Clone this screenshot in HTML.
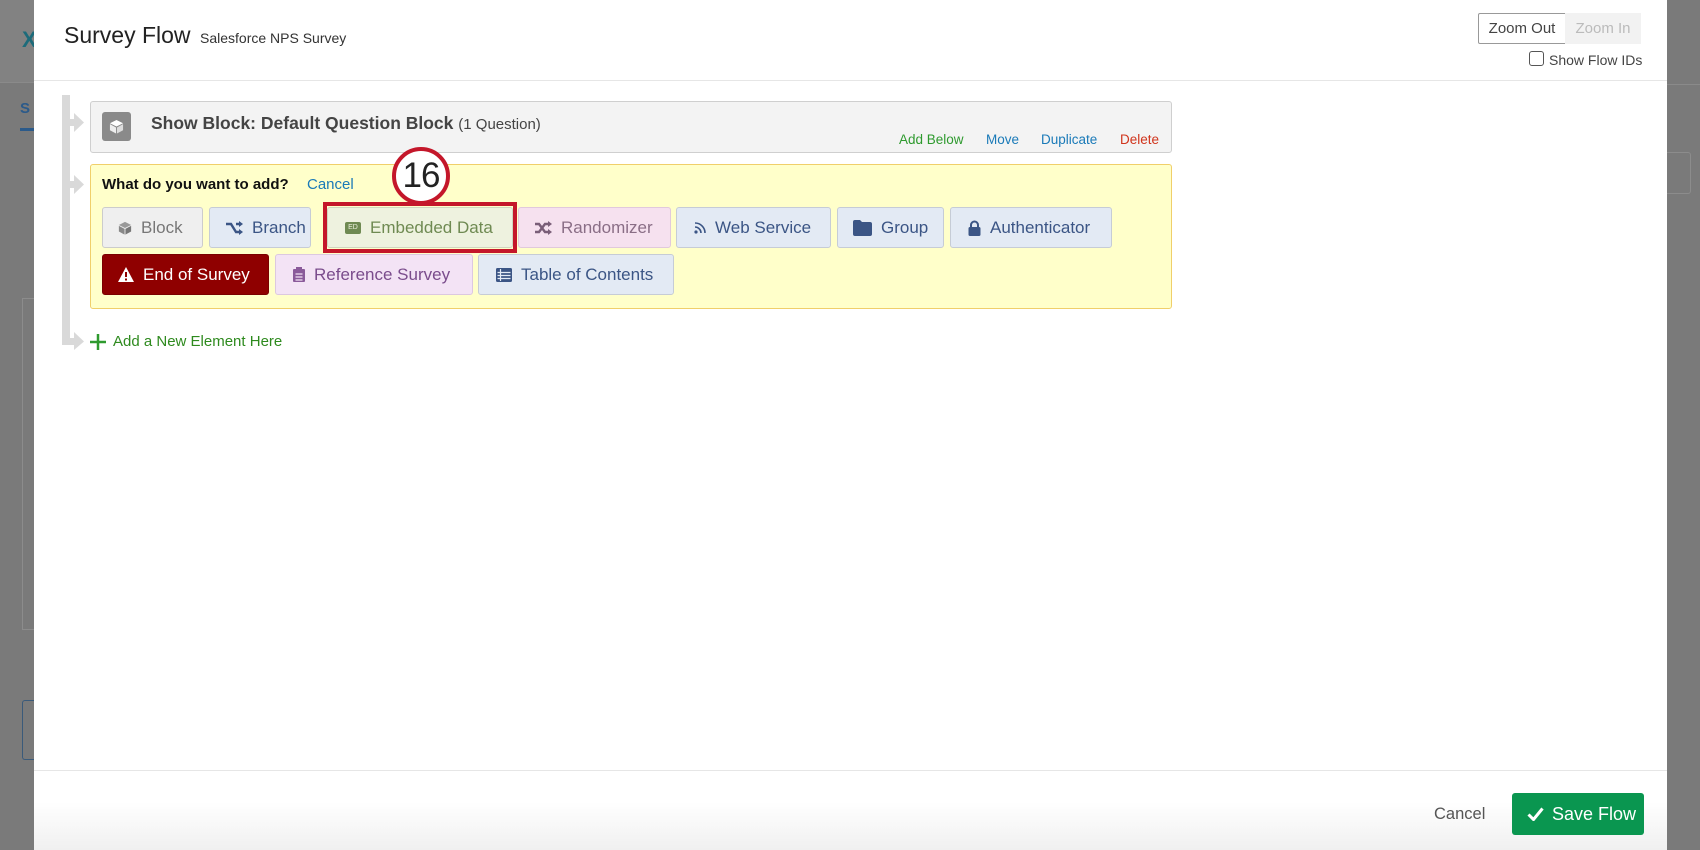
<!DOCTYPE html>
<html><head><meta charset="utf-8"><style>
*{box-sizing:border-box;margin:0;padding:0}
body{width:1700px;height:850px;overflow:hidden;background:#7a7a7a;font-family:"Liberation Sans",sans-serif;position:relative}
.a{position:absolute}
.modal{left:34px;top:0;width:1633px;height:850px;background:#fff}
.btn{position:absolute;height:41px;border:1px solid #c9ccd2;border-radius:3px;font-size:17px;line-height:39px;padding-left:15px;white-space:nowrap;display:flex;align-items:center;gap:9px}
.blue{background:#e3eaf4;color:#3b5585;border-color:#c6ccd6}
.lk{position:absolute;top:132px;font-size:13.5px}
</style></head><body>
<div class="a" style="left:0;top:0;width:34px;height:82px;background:#828282"></div>
<div class="a" style="left:22px;top:27px;font-size:22px;font-weight:bold;color:#1d6b7a">X</div>
<div class="a" style="left:20px;top:100px;font-size:15px;font-weight:bold;color:#2b5a8a">S</div>
<div class="a" style="left:20px;top:128px;width:14px;height:3px;background:#2b5a8a"></div>
<div class="a" style="left:0;top:82px;width:34px;height:1px;background:#8a8a8a"></div>
<div class="a" style="left:22px;top:298px;width:12px;height:332px;border:1px solid #8c8c8c;border-right:none"></div>
<div class="a" style="left:22px;top:700px;width:12px;height:60px;border:1px solid #3a5a7a;border-right:none;border-radius:3px 0 0 3px"></div>
<div class="a" style="left:1667px;top:152px;width:24px;height:42px;border:1px solid #8c8c8c;border-left:none;border-radius:0 3px 3px 0"></div>
<div class="a" style="left:1667px;top:84px;width:33px;height:1px;background:#8a8a8a"></div>

<div class="a modal"></div>
<div class="a" style="left:64px;top:22px;font-size:23px;color:#222">Survey Flow</div>
<div class="a" style="left:200px;top:30px;font-size:14px;color:#333">Salesforce NPS Survey</div>
<div class="a" style="left:1478px;top:13px;width:88px;height:31px;border:1px solid #999;border-radius:2px 0 0 2px;font-size:15px;color:#444;text-align:center;line-height:29px">Zoom Out</div>
<div class="a" style="left:1565px;top:13px;width:76px;height:31px;background:#f2f2f2;font-size:15px;color:#bbb;text-align:center;line-height:31px">Zoom In</div>
<div class="a" style="left:1529px;top:51px;width:15px;height:15px;border:1px solid #555;border-radius:3px;background:#fff"></div>
<div class="a" style="left:1549px;top:52px;font-size:14px;color:#444">Show Flow IDs</div>
<div class="a" style="left:34px;top:80px;width:1633px;height:1px;background:#e6e6e6"></div>

<div class="a" style="left:62px;top:95px;width:8px;height:250px;background:#d9d9d9"></div>
<svg class="a" style="left:62px;top:110px" width="24" height="240"><g fill="#d9d9d9">
<rect x="0" y="9" width="12" height="7"/><polygon points="12,3 22,12.5 12,22"/>
<rect x="0" y="71" width="12" height="7"/><polygon points="12,65 22,74.5 12,84"/>
<rect x="0" y="228" width="12" height="7"/><polygon points="12,222 22,231.5 12,240"/></g></svg>

<div class="a" style="left:90px;top:101px;width:1082px;height:52px;background:#f3f3f3;border:1px solid #cfcfcf;border-radius:3px"></div>
<div class="a" style="left:102px;top:112px;width:29px;height:29px;background:#8a8a8a;border-radius:3px"></div>
<svg class="a" style="left:109px;top:119px" width="15" height="15" viewBox="0 0 16 16"><polygon points="8,1 15,4.5 8,8 1,4.5" fill="#fff"/><polygon points="1,5.5 7.5,9 7.5,15.5 1,12" fill="#eee"/><polygon points="15,5.5 8.5,9 8.5,15.5 15,12" fill="#ddd"/></svg>
<div class="a" style="left:151px;top:113px;font-size:17.5px;font-weight:bold;color:#444">Show Block: Default Question Block <span style="font-weight:normal;font-size:15px;color:#444">(1 Question)</span></div>
<div class="lk" style="left:899px;color:#2e9a2e">Add Below</div>
<div class="lk" style="left:986px;color:#1a7ab8">Move</div>
<div class="lk" style="left:1041px;color:#1a7ab8">Duplicate</div>
<div class="lk" style="left:1120px;color:#d0341c">Delete</div>

<div class="a" style="left:90px;top:164px;width:1082px;height:145px;background:#ffffca;border:1px solid #f0cf6a;border-radius:3px"></div>
<div class="a" style="left:102px;top:176px;font-size:15px;font-weight:bold;color:#111">What do you want to add?</div>
<div class="a" style="left:307px;top:176px;font-size:15px;color:#1a7ab8">Cancel</div>

<div class="btn" style="left:102px;top:207px;width:101px;background:#efefef;color:#777;border-color:#ccc"><svg width="14" height="14" viewBox="0 0 16 16"><polygon points="8,1 15,4.5 8,8 1,4.5" fill="#999"/><polygon points="1,5.5 7.5,9 7.5,15.5 1,12" fill="#888"/><polygon points="15,5.5 8.5,9 8.5,15.5 15,12" fill="#777"/></svg>Block</div>
<div class="btn blue" style="left:209px;top:207px;width:102px"><svg width="18" height="14" viewBox="0 0 18 14"><path d="M1 3h5l5 8h4M11 3h4" stroke="#3b5585" stroke-width="2.4" fill="none"/><polygon points="14,0 18,3 14,6" fill="#3b5585"/><polygon points="14,8 18,11 14,14" fill="#3b5585"/></svg>Branch</div>
<div class="btn" style="left:327px;top:207px;width:186px;background:#eef2df;color:#6f8a52;border-color:#d0d6bf;padding-left:17px"><span style="display:inline-block;width:16px;height:12px;background:#6f8a52;border-radius:2px;font-size:7px;color:#eef2df;line-height:12px;text-align:center">ED</span>Embedded Data</div>
<div class="a" style="left:323px;top:202px;width:194px;height:51px;border:4px solid #c4172a"></div>
<div class="btn" style="left:518px;top:207px;width:153px;background:#f6e1ef;color:#8a6e86;border-color:#e1c9dc"><svg width="18" height="14" viewBox="0 0 18 14"><path d="M1 3h4l6 8h3M1 11h4l6-8h3" stroke="#7a5e78" stroke-width="2.4" fill="none"/><polygon points="14,0 18,3 14,6" fill="#7a5e78"/><polygon points="14,8 18,11 14,14" fill="#7a5e78"/></svg>Randomizer</div>
<div class="btn blue" style="left:676px;top:207px;width:155px;padding-left:17px"><svg width="12" height="12" viewBox="0 0 12 12"><circle cx="2" cy="10" r="1.6" fill="#3b5585"/><path d="M1 5a6 6 0 0 1 6 6M1 1a10 10 0 0 1 10 10" stroke="#3b5585" stroke-width="1.6" fill="none"/></svg>Web Service</div>
<div class="btn blue" style="left:837px;top:207px;width:107px"><svg width="19" height="16" viewBox="0 0 19 16"><path d="M0 2q0-2 2-2h5l2 2h8q2 0 2 2v10q0 2-2 2H2q-2 0-2-2z" fill="#3b5585"/></svg>Group</div>
<div class="btn blue" style="left:950px;top:207px;width:162px;padding-left:17px"><svg width="13" height="16" viewBox="0 0 13 16"><path d="M3 7V5a3.5 3.5 0 0 1 7 0v2" stroke="#3b5585" stroke-width="2" fill="none"/><rect x="0.5" y="7" width="12" height="9" rx="1.5" fill="#3b5585"/></svg>Authenticator</div>

<div class="btn" style="left:102px;top:254px;width:167px;background:#8f0000;color:#fff;border-color:#7a0000"><svg width="16" height="15" viewBox="0 0 16 15"><polygon points="8,0 16,15 0,15" fill="#fff"/><rect x="7" y="5" width="2" height="5" fill="#8f0000"/><rect x="7" y="11.5" width="2" height="2" fill="#8f0000"/></svg>End of Survey</div>
<div class="btn" style="left:275px;top:254px;width:198px;background:#f3e3f5;color:#7a4c8c;border-color:#dcc8e0;padding-left:17px"><svg width="12" height="15" viewBox="0 0 12 15"><rect x="0" y="2" width="12" height="13" rx="1" fill="#8a5a9a"/><rect x="3" y="0" width="6" height="3" fill="#8a5a9a"/><path d="M2.5 7h7M2.5 10h7M2.5 13h7" stroke="#f3e3f5" stroke-width="1.2"/></svg>Reference Survey</div>
<div class="btn blue" style="left:478px;top:254px;width:196px;padding-left:17px"><svg width="16" height="14" viewBox="0 0 16 14"><rect width="16" height="14" rx="1.5" fill="#3b5585"/><path d="M1.5 4.5h13M1.5 7.5h13M1.5 10.5h13M4.5 1v12" stroke="#e3eaf4" stroke-width="1.2"/></svg>Table of Contents</div>

<div class="a" style="left:392px;top:147px;width:58px;height:58px;border:4px solid #c4172a;border-radius:50%;background:#fff;text-align:center;line-height:50px;font-size:35px;color:#222;letter-spacing:-1px">16</div>

<svg class="a" style="left:90px;top:334px" width="16" height="16"><path d="M8 0v16M0 8h16" stroke="#2e9a2e" stroke-width="2.5"/></svg>
<div class="a" style="left:113px;top:333px;font-size:15px;color:#2e8a1e">Add a New Element Here</div>

<div class="a" style="left:34px;top:770px;width:1633px;height:80px;background:linear-gradient(#fff 40%,#f0f0f0)"></div>
<div class="a" style="left:34px;top:770px;width:1633px;height:1px;background:#e6e6e6"></div>
<div class="a" style="left:1434px;top:805px;font-size:16.5px;color:#555">Cancel</div>
<div class="a" style="left:1512px;top:793px;width:132px;height:42px;background:#0a9650;border-radius:3px;color:#fff;font-size:18px;display:flex;align-items:center;padding-left:15px;gap:8px"><svg width="17" height="14" viewBox="0 0 17 14"><path d="M1.5 7.5l5 5L15.5 1.5" stroke="#fff" stroke-width="3" fill="none"/></svg>Save Flow</div>
</body></html>
